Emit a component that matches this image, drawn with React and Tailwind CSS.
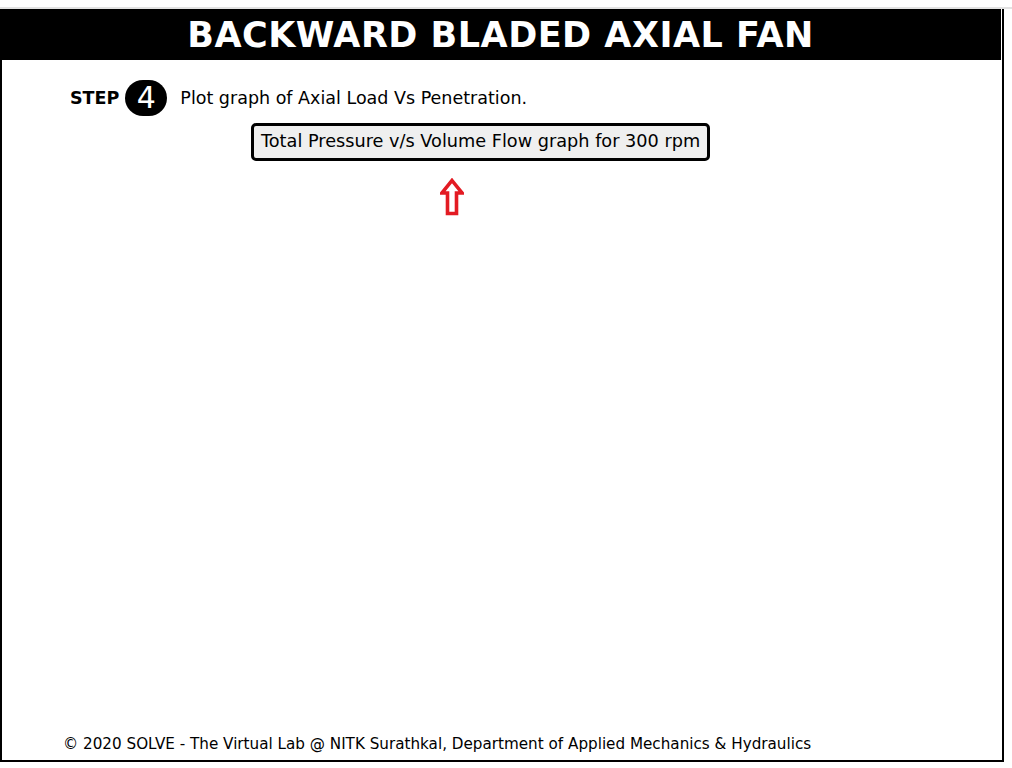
import React from 'react';

// Outlined up-arrow under the graph button
const UpArrow = () => (
  <svg width="24" height="38" viewBox="0 0 24 38">
    <path
      d="M12 2.5 L22 15 L16.5 15 L16.5 35.5 L7.5 35.5 L7.5 15 L2 15 Z"
      fill="#fff"
      stroke="#e31b23"
      strokeWidth="3.6"
      strokeLinejoin="miter"
    />
  </svg>
);

const App = () => {
  return (
    <div className="w-[1012px] h-[768px] bg-white flex flex-col font-['DejaVu_Sans',Verdana,sans-serif] text-black overflow-hidden">
      {/* top strip */}
      <div className="h-[7px] bg-white shrink-0" />
      <div className="h-[2px] bg-[#e2e2e2] shrink-0" />

      <div className="w-[1004px] h-[753px] border-x-2 border-b-2 border-black flex flex-col shrink-0">
        {/* Header */}
        <div className="h-[51px] bg-black flex items-center justify-center -ml-[2px] mr-[1px]">
          <h1 className="text-white font-bold text-[35px] tracking-[0.5px] leading-none pt-[2px]">
            BACKWARD BLADED AXIAL FAN
          </h1>
        </div>

        {/* Step row */}
        <div className="flex items-center mt-[20px] pl-[68px]">
          <span className="font-bold text-[17.5px]">STEP</span>
          <div className="ml-[6px] w-[42px] h-[36px] rounded-full bg-black flex items-center justify-center">
            <span className="text-white text-[30px] leading-none">4</span>
          </div>
          <span className="ml-[13px] text-[17.5px]">Plot graph of Axial Load Vs Penetration.</span>
        </div>

        {/* Graph button + arrow */}
        <div className="flex flex-col items-start pl-[249px] mt-[7px]">
          <button className="h-[38px] px-[7px] border-[3px] border-black rounded-[5px] bg-[#efefef] text-[17.7px] leading-none">
            Total Pressure v/s Volume Flow graph for 300 rpm
          </button>
          <div className="ml-[189px] mt-[17px]">
            <UpArrow />
          </div>
        </div>

        <div className="flex-1" />

        {/* Footer */}
        <div className="pl-[61px] pb-[8px] text-[15.2px] leading-none">
          © 2020 SOLVE - The Virtual Lab @ NITK Surathkal, Department of Applied Mechanics &amp; Hydraulics
        </div>
      </div>
    </div>
  );
};

export default App;
